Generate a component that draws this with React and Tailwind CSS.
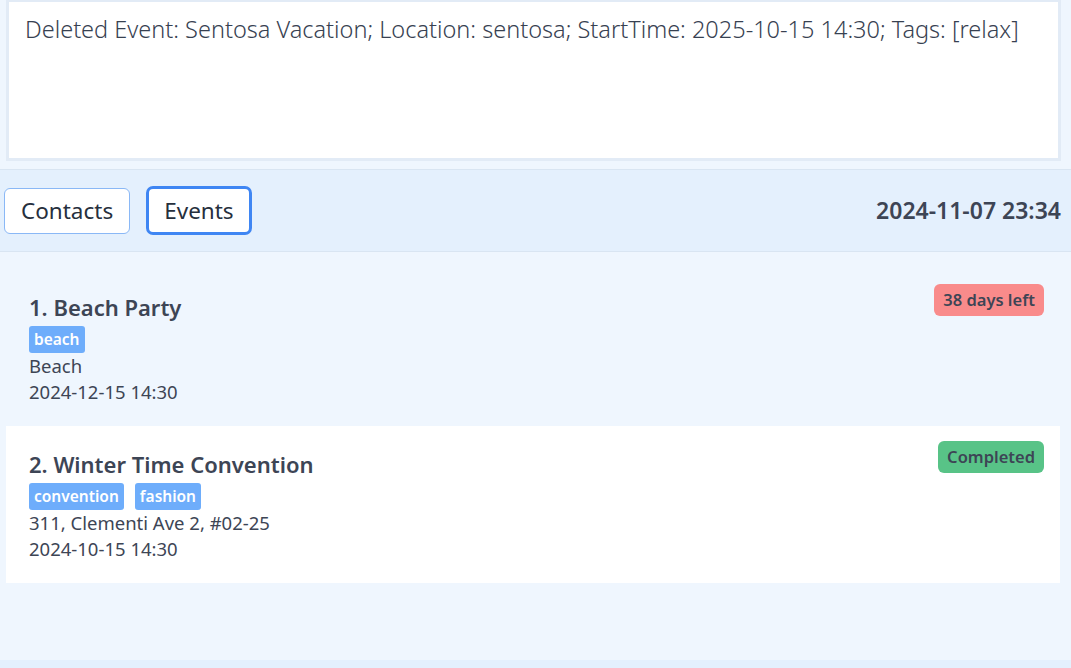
const events = [
  {
    id: 1,
    name: 'Beach Party',
    tags: ['beach'],
    location: 'Beach',
    start: '2024-12-15 14:30',
    status: '38 days left',
    statusClass: 'bg-[#f98b8b]',
  },
  {
    id: 2,
    name: 'Winter Time Convention',
    tags: ['convention', 'fashion'],
    location: '311, Clementi Ave 2, #02-25',
    start: '2024-10-15 14:30',
    status: 'Completed',
    statusClass: 'bg-[#58c387]',
  },
];

function EventCard({ event, index }) {
  return (
    <div
      className={`flex justify-between h-[157px] pl-[23px] pr-[16px] pt-[15px] ${
        index % 2 === 1 ? 'bg-white' : ''
      }`}
    >
      <div className="flex flex-col pt-[6px]">
        <h3 className="text-[22px] leading-[34px] font-semibold text-[#3d4555]">
          {index + 1}. {event.name}
        </h3>
        <div className="flex gap-[11px] mt-[2px]">
          {event.tags.map((tag) => (
            <span
              key={tag}
              className="px-[5px] h-[27px] leading-[27px] rounded-[3px] bg-[#6eadfb] text-white text-[15.5px] font-semibold"
            >
              {tag}
            </span>
          ))}
        </div>
        <p className="text-[18.5px] leading-[26px] text-[#3d4555]">{event.location}</p>
        <p className="text-[18.5px] leading-[26px] text-[#3d4555]">{event.start}</p>
      </div>
      <div>
        <span
          className={`inline-block h-[32px] leading-[32px] px-[9px] rounded-[6px] text-[16.5px] font-semibold text-[#3d4555] ${event.statusClass}`}
        >
          {event.status}
        </span>
      </div>
    </div>
  );
}

export default function App() {
  return (
    <div
      className="h-[668px] flex flex-col bg-[#eff6fe]"
      style={{ fontFamily: '"Noto Sans", "Open Sans", sans-serif' }}
    >
      {/* Command result */}
      <div className="ml-[6px] mr-[10px] h-[161px] border-[3px] border-t-[2px] border-[#e2ebf6] bg-white pl-[16px] pt-[10px]">
        <p className="text-[23.5px] leading-[34px] font-light text-[#374151]">
          Deleted Event: Sentosa Vacation; Location: sentosa; StartTime: 2025-10-15 14:30; Tags: [relax]
        </p>
      </div>

      {/* Tabs bar */}
      <div className="mt-[8px] h-[83px] flex items-center justify-between border-y border-[#d9e5f2] bg-[#e4f0fd] pl-[4px] pr-[10px]">
        <div className="flex items-center gap-[16px]">
          <button className="h-[46px] px-[16px] rounded-[6px] border border-[#8ab8f6] bg-white text-[22.5px] text-[#262f3d]">
            Contacts
          </button>
          <button className="h-[49px] px-[15px] rounded-[7px] border-[3px] border-[#3f86f3] bg-white text-[22.5px] text-[#262f3d]">
            Events
          </button>
        </div>
        <span className="text-[23px] font-semibold text-[#3d4555]">2024-11-07 23:34</span>
      </div>

      {/* Event list */}
      <div className="flex-1 pl-[6px] pt-[17px] pr-[11px]">
        {events.map((event, i) => (
          <EventCard key={event.id} event={event} index={i} />
        ))}
      </div>

      <div className="h-[8px] bg-[#e4f0fd]"></div>
    </div>
  );
}
